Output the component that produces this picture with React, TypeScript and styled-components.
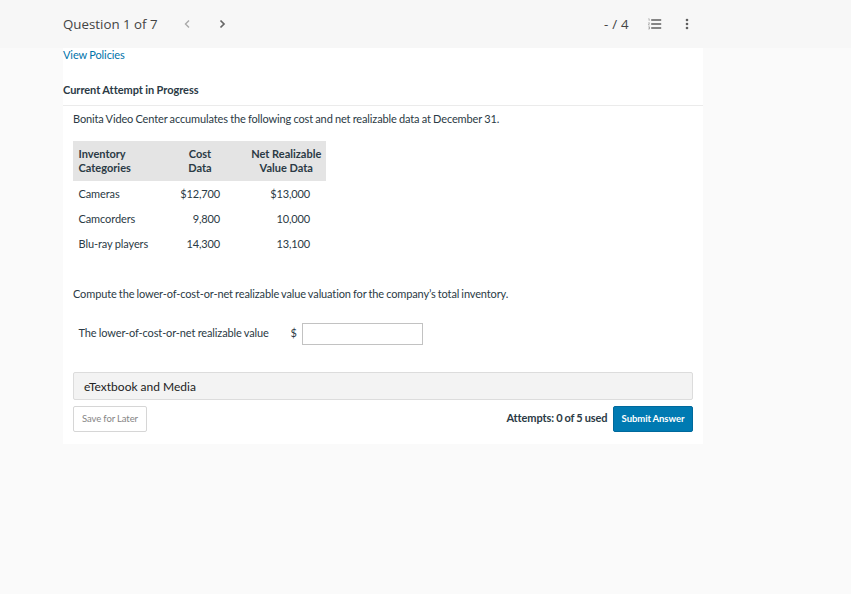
import React from "react";
import styled, { createGlobalStyle } from "styled-components";

const Global = createGlobalStyle`
  * { box-sizing: border-box; }
  body {
    margin: 0; background: #fafafa; font-family: Lato, sans-serif; font-size: 11px; color: #2b3a45;
    font-variant-ligatures: none;
  }
`;
const Header = styled.header`
  height: 48px; background: #f7f7f7; padding-left: 63px; display: flex; align-items: center;
  font: 13.3px "Open Sans", sans-serif; color: #444;
`;
const HeaderInner = styled.div`width: 640px; height: 48px; display: flex; align-items: center;`;
const Title = styled.div`width: 119px; white-space: nowrap;`;
const IconButton = styled.button<{ $w: number }>`
  width: ${(p) => p.$w}px; height: 32px; border: 0; padding: 0; background: none; color: inherit;
  display: flex; align-items: center; justify-content: flex-start;
`;
const Score = styled.div`margin-left: auto; width: 44px; white-space: nowrap; word-spacing: 0.5px;`;
const Card = styled.main`margin-left: 63px; width: 640px; height: 396px; background: #fff;`;
const Policies = styled.a`
  display: block; height: 34px; line-height: 14px; color: #0073aa; white-space: nowrap;
  letter-spacing: -0.1px; word-spacing: -0.3px;
`;
const Status = styled.h2`
  margin: 0; height: 24px; line-height: 16px; font-size: 11px; font-weight: 700; word-spacing: -0.2px;
  letter-spacing: -0.04px; border-bottom: 1px solid #ebebeb;
`;
const Body = styled.section`padding: 6px 10px 0;`;
const Text = styled.p`
  margin: 0; height: 15px; line-height: 14px; white-space: nowrap; letter-spacing: -0.13px; word-spacing: -0.4px;
`;
const Table = styled.table`
  margin-top: 14px; border-collapse: collapse; width: 253px; table-layout: fixed; line-height: 14px;
`;
const Th = styled.th<{ $align: string; $pad: number; $w: number }>`
  width: ${(p) => p.$w}px; height: 40px; background: #e4e4e4; padding: 0 0 0 ${(p) => p.$pad}px;
  text-align: ${(p) => p.$align}; white-space: nowrap;
`;
const Td = styled.td<{ $right?: number }>`
  height: 25px; padding: 0 ${(p) => p.$right ?? 0}px 0 ${(p) => (p.$right ? 0 : 5.5)}px;
  text-align: ${(p) => (p.$right ? "right" : "left")}; white-space: nowrap;
  letter-spacing: ${(p) => (p.$right ? -0.16 : -0.1)}px; word-spacing: -0.3px;
`;
const Prompt = styled(Text)`margin-top: 31px; word-spacing: -0.5px;`;
const AnswerRow = styled.label`
  margin-top: 20px; height: 23px; padding-left: 5.5px; display: flex; align-items: center;
`;
const AnswerLabel = styled.span`
  width: 212px; height: 15px; line-height: 14px; letter-spacing: -0.13px; word-spacing: -0.3px; white-space: nowrap;
`;
const Dollar = styled.span`width: 11.5px; height: 16px; line-height: 13px;`;
const Input = styled.input`width: 121px; height: 22px; border: 1px solid #c2c2c2; padding: 0 4px; background: #fff;`;
const Resource = styled.button`
  display: block; width: 620px; height: 28px; margin-top: 27px; padding: 0 10px; text-align: left;
  border: 1px solid #dcdcdc; border-radius: 2px; background: #f3f3f3; font: 12px Lato, sans-serif; color: #222;
`;
const Actions = styled.footer`display: flex; align-items: center; margin-top: 6px;`;
const Attempts = styled.strong`
  height: 17px; line-height: 14px; margin-left: auto; margin-right: 5.5px; font-size: 11px;
  letter-spacing: -0.09px; word-spacing: -0.5px;
`;
const Button = styled.button<{ $primary?: boolean }>`
  width: ${(p) => (p.$primary ? 80 : 74)}px; height: 26px; padding: 0 0 1px; border-radius: 2px; white-space: nowrap;
  border: 1px solid ${(p) => (p.$primary ? "#00699c" : "#d6d6d6")};
  background: ${(p) => (p.$primary ? "#007ab2" : "#fff")}; color: ${(p) => (p.$primary ? "#fff" : "#858585")};
  font: ${(p) => (p.$primary ? 700 : 400)} 9.5px Lato, sans-serif; letter-spacing: -0.07px; word-spacing: -0.3px;
`;

const rows = [
  ["Cameras", "$12,700", "$13,000"],
  ["Camcorders", "9,800", "10,000"],
  ["Blu-ray players", "14,300", "13,100"],
];

export default function App() {
  return (
    <>
      <Global />
      <Header>
        <HeaderInner>
          <Title>Question 1 of 7</Title>
          <IconButton $w={35} aria-label="Previous">
            <svg width="10" height="10" fill="none" stroke="#aaa" strokeWidth="1.4"><path d="M7 1.5 3.5 5 7 8.5" /></svg>
          </IconButton>
          <IconButton $w={20} aria-label="Next">
            <svg width="10" height="10" fill="none" stroke="#666" strokeWidth="1.7"><path d="M3.5 1.5 7 5 3.5 8.5" /></svg>
          </IconButton>
          <Score>- / 4</Score>
          <IconButton $w={36} aria-label="Question list">
            <svg width="14" height="12">
              <path d="M3.2 2h10M3.2 6h10M3.2 10h10" fill="none" stroke="#858585" strokeWidth="2" />
              <path d="M.4 .8h.8v2M.3 4.8h1.2L.4 7h1.2M.3 8.8h1.2v2.2H.3M.7 9.9h.8" fill="none" stroke="#888" strokeWidth=".6" />
            </svg>
          </IconButton>
          <IconButton $w={19} aria-label="More options">
            <svg width="6" height="12" fill="#606060"><circle cx="3" cy="2" r="1.3" /><circle cx="3" cy="6" r="1.3" /><circle cx="3" cy="10" r="1.3" /></svg>
          </IconButton>
        </HeaderInner>
      </Header>
      <Card>
        <Policies>View Policies</Policies>
        <Status>Current Attempt in Progress</Status>
        <Body>
          <Text>Bonita Video Center accumulates the following cost and net realizable data at December 31.</Text>
          <Table>
            <thead>
              <tr>
                <Th $align="left" $pad={5.5} $w={88}>Inventory<br />Categories</Th>
                <Th $align="center" $pad={0} $w={78}>Cost<br />Data</Th>
                <Th $align="center" $pad={7.5} $w={87}>Net Realizable<br />Value Data</Th>
              </tr>
            </thead>
            <tbody>
              {rows.map(([name, cost, value]) => (
                <tr key={name}><Td>{name}</Td><Td $right={19}>{cost}</Td><Td $right={16}>{value}</Td></tr>
              ))}
            </tbody>
          </Table>
          <Prompt>Compute the lower-of-cost-or-net realizable value valuation for the company’s total inventory.</Prompt>
          <AnswerRow>
            <AnswerLabel>The lower-of-cost-or-net realizable value</AnswerLabel>
            <Dollar>$</Dollar>
            <Input />
          </AnswerRow>
          <Resource>eTextbook and Media</Resource>
          <Actions>
            <Button>Save for Later</Button>
            <Attempts>Attempts: 0 of 5 used</Attempts>
            <Button $primary>Submit Answer</Button>
          </Actions>
        </Body>
      </Card>
    </>
  );
}
